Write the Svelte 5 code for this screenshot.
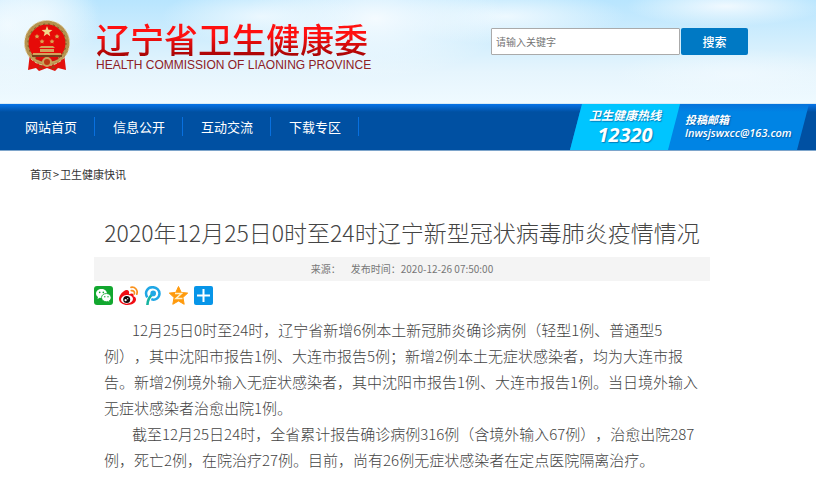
<script lang="ts">
  let keyword = "";

  const menu = ["网站首页", "信息公开", "互动交流", "下载专区"];

  const paragraphs = [
    "12月25日0时至24时，辽宁省新增6例本土新冠肺炎确诊病例（轻型1例、普通型5例），其中沈阳市报告1例、大连市报告5例；新增2例本土无症状感染者，均为大连市报告。新增2例境外输入无症状感染者，其中沈阳市报告1例、大连市报告1例。当日境外输入无症状感染者治愈出院1例。",
    "截至12月25日24时，全省累计报告确诊病例316例（含境外输入67例），治愈出院287例，死亡2例，在院治疗27例。目前，尚有26例无症状感染者在定点医院隔离治疗。",
  ];
</script>

<header>
  <a class="logo" href="/">
    <svg class="emblem" viewBox="0 0 48 52" aria-hidden="true">
      <path d="M7 33 L5 50 L13 48 L16 51 L24 48 L32 51 L35 48 L43 50 L41 33 Z" fill="#e3100b" />
      <circle cx="24" cy="23" r="20.500" fill="#e60b08" stroke="#b4924f" stroke-width="4" />
      <circle cx="24" cy="23" r="22.500" fill="none" stroke="#e2cf9c" stroke-width="1" stroke-dasharray="3 2" />
      <circle cx="24" cy="23" r="19" fill="none" stroke="#755020" stroke-width="1" stroke-dasharray="2 3" />
      <path d="M24 6 l1.400 3.700 4 .2 -3.100 2.500 1 3.900 -3.300 -2.200 -3.300 2.200 1 -3.900 -3.100 -2.500 4 -.2z" fill="#f3d98b" />
      <g fill="#dba652">
        <path d="M14 14l.8 1.600 1.700.1-1.300 1.200.4 1.700-1.600-.9-1.600.9.4-1.700-1.300-1.200 1.700-.1z" />
        <path d="M34 14l.8 1.600 1.700.1-1.300 1.200.4 1.700-1.600-.9-1.600.9.4-1.700-1.300-1.200 1.700-.1z" />
        <path d="M19 19l.8 1.600 1.700.1-1.300 1.200.4 1.700-1.600-.9-1.600.9.4-1.700-1.300-1.200 1.700-.1z" />
        <path d="M29 19l.8 1.600 1.700.1-1.300 1.200.4 1.700-1.600-.9-1.600.9.4-1.700-1.300-1.200 1.700-.1z" />
      </g>
      <path d="M18 26h12l2 2H16zM17 29h14v3H17zM10 33h28v2H10z" fill="#d3a45b" />
      <path d="M9 35h30v2H9z" fill="#72401c" />
      <path d="M6 33 Q12 42 24 42 T42 33 L38 40 Q24 47 10 40Z" fill="#c6a05a" />
      <path d="M13 38 Q24 44 35 38" fill="none" stroke="#d3120c" stroke-width="2" />
      <circle cx="24" cy="42" r="4" fill="#bd3a14" stroke="#caa35a" stroke-width="2" />
      <path d="M15 48l3-3 3 4zM33 48l-3-3-3 4z" fill="#a33a14" />
    </svg>
    <span class="name">
      <strong>辽宁省卫生健康委</strong>
      <small>HEALTH COMMISSION OF LIAONING PROVINCE</small>
    </span>
  </a>
  <form on:submit|preventDefault>
    <input type="text" aria-label="请输入关键字" placeholder="请输入关键字" bind:value={keyword} />
    <button type="submit">搜索</button>
  </form>
</header>

<nav>
  <ul>
    {#each menu as item}
      <li><a href="/">{item}</a></li>
    {/each}
  </ul>
  <div class="contact">
    <div class="hotline">
      <span>卫生健康热线</span>
      <b>12320</b>
    </div>
    <div class="mail">
      <span>投稿邮箱</span>
      <b>lnwsjswxcc@163.com</b>
    </div>
  </div>
</nav>

<div class="crumbs">
  <a href="/">首页</a>
  <span>&gt;</span>
  <a href="/">卫生健康快讯</a>
</div>

<article>
  <h1>2020年12月25日0时至24时辽宁新型冠状病毒肺炎疫情情况</h1>
  <div class="meta">
    <span>来源：</span>
    <span>发布时间：2020-12-26 07:50:00</span>
  </div>
  <div class="share">
    <a href="/" aria-label="微信">
      <svg viewBox="0 0 19 19">
        <rect width="19" height="19" rx="3" fill="#12a72f" />
        <path d="M7.500 3C4.400 3 2 5 2 7.600c0 1.500.8 2.700 2 3.500L3.500 13l2.200-1.200 1.800.3c3 0 5.500-2 5.500-4.500S10.500 3 7.500 3z" fill="#fff" />
        <path d="M12.300 7.500c-2.700 0-4.800 1.800-4.800 4.100s2.100 4.100 4.800 4.100l1.600-.3 1.900 1.100-.5-1.800c1.100-.7 1.800-1.800 1.800-3.100 0-2.300-2.100-4.100-4.800-4.100z" fill="#fff" stroke="#12a72f" stroke-width=".8" />
        <g fill="#12a72f"><circle cx="5.700" cy="6.400" r=".8" /><circle cx="9.300" cy="6.400" r=".8" /><circle cx="10.800" cy="10.700" r=".7" /><circle cx="14" cy="10.700" r=".7" /></g>
      </svg>
    </a>
    <a href="/" aria-label="新浪微博">
      <svg viewBox="0 0 19 19">
        <path d="M7.500 4C4.700 4.200 0 9.100 0 13c0 3.600 4 6 8.500 6 5.200 0 8.500-2.800 8.500-5.500 0-1.800-1.200-2.800-2.500-3.200.8-2.700-1.300-3.500-4.500-2.100C10.600 5.700 9.700 3.900 7.500 4z" fill="#f00d14" />
        <ellipse cx="8" cy="13.300" rx="6" ry="4.300" fill="#fff" transform="rotate(-7 8 13.300)" />
        <circle cx="7.700" cy="13.500" r="3.500" fill="#160909" />
        <circle cx="6.600" cy="14.200" r="1.100" fill="#fff" /><circle cx="8.700" cy="12.700" r=".6" fill="#fff" />
        <path d="M12.300 4.700c2.200-.4 3.600 1.300 3 3.200M12 1.300c4.200-.7 7.200 2.900 5.800 6.800" fill="none" stroke="#f9921e" stroke-width="1.700" stroke-linecap="round" />
      </svg>
    </a>
    <a href="/" aria-label="腾讯微博">
      <svg viewBox="0 0 19 19">
        <path d="M3.300 11.300C.1 6.100 3.500 1.200 8.700 1.200c4 0 6.800 2.900 6.800 6.400 0 4-4 7.300-8.200 5.600" fill="none" stroke="#20a7e5" stroke-width="2.500" />
        <path d="M3.400 19C3.500 14.200 5 11 8.700 8" fill="none" stroke="#16b4a0" stroke-width="2.600" />
        <circle cx="9.200" cy="7.400" r="2.800" fill="#20a7e5" />
      </svg>
    </a>
    <a href="/" aria-label="QQ空间">
      <svg viewBox="0 0 19 19">
        <path d="M9.500.5l2.700 5.900 6.500.7-4.800 4.400 1.300 6.800-5.700-3.300-5.700 3.300 1.300-6.800L.3 7.100l6.500-.7z" fill="#ff9a0c" stroke="#ff9a0c" stroke-linejoin="round" />
        <path d="M6 7.500h6.500L7 12.500h6.500" fill="none" stroke="#fff2cc" stroke-width="1.500" />
      </svg>
    </a>
    <a href="/" aria-label="更多">
      <svg viewBox="0 0 19 19">
        <rect width="19" height="19" rx="2" fill="#0795e8" />
        <path d="M9.500 3v13M3 9.500h13" stroke="#fff" stroke-width="2" />
      </svg>
    </a>
  </div>
  <div class="content">
    {#each paragraphs as text}
      <p>{text}</p>
    {/each}
  </div>
</article>

<style>
  :global(body) {
    margin: 0;
    background: #fff;
    color: #333;
    font-family: "Noto Sans CJK SC", sans-serif;
    font-size: 11px;
  }

  a {
    color: inherit;
    text-decoration: none;
  }

  header {
    box-sizing: border-box;
    height: 104px;
    padding: 20px 68px 0 23px;
    display: flex;
    justify-content: space-between;
    align-items: flex-start;
    border-bottom: 1px solid #d8ebf6;
    background:
      radial-gradient(ellipse 60px 40px at 5% 14%, #f1faffcc, transparent),
      radial-gradient(ellipse 90px 70px at 1% 24%, #f6fcffdd, transparent),
      radial-gradient(ellipse 100px 30px at 32% 16%, #f4fbffcc, transparent),
      radial-gradient(ellipse 130px 60px at 46% 18%, #f8fcffee, transparent),
      radial-gradient(ellipse 120px 28px at 62% 16%, #f4fbffdd, transparent),
      radial-gradient(ellipse 100px 20px at 89% 6%, #f8fcffdd, transparent),
      radial-gradient(ellipse 120px 26px at 90% 72%, #f2faffaa, transparent),
      linear-gradient(#b8e5fe, #d2eefd 40%, #e6f5fd 70%, #effaff);
  }

  .logo {
    display: flex;
    gap: 25px;
  }

  .emblem {
    width: 48px;
    height: 52px;
  }

  .name {
    display: flex;
    flex-direction: column;
  }

  .name strong {
    font-size: 34px;
    font-weight: 500;
    line-height: 38px;
    color: transparent;
    background: linear-gradient(#ff1010 40%, #a50505 95%);
    background-clip: text;
    white-space: nowrap;
  }

  .name small {
    font-family: "Liberation Sans", sans-serif;
    font-size: 12px;
    line-height: 14px;
    color: #8d2025;
    white-space: nowrap;
  }

  form {
    display: flex;
    gap: 1px;
    margin-top: 8px;
  }

  form input {
    box-sizing: border-box;
    width: 189px;
    height: 27px;
    padding: 0 4px;
    border: 1px solid #aaa;
    border-radius: 1px;
    font: 10px "Noto Sans CJK SC", sans-serif;
  }

  form input::placeholder {
    color: #757575;
  }

  form button {
    width: 67px;
    height: 27px;
    padding: 0;
    border: 0;
    border-radius: 2px;
    background: #0079c4;
    color: #fff;
    font: 500 12px "Noto Sans CJK SC", sans-serif;
    cursor: pointer;
  }

  nav {
    height: 46px;
    padding: 0 7px;
    display: flex;
    justify-content: space-between;
    background: linear-gradient(#0674e8, #0050a2 8px);
    border-bottom: 1px solid #7ea5cb;
  }

  ul {
    margin: 0;
    padding: 0 0 2px;
    display: flex;
    align-items: center;
    list-style: none;
  }

  li {
    padding: 0 17px 0 18px;
    border-right: 1px solid #0870df;
    color: #fff;
    font-size: 13px;
    line-height: 19px;
    white-space: nowrap;
  }

  .contact {
    display: flex;
    color: #fff;
    font-style: italic;
    font-weight: 700;
    text-shadow: 1px 1px 1px #00408088;
    background: linear-gradient(#0673dc, #0084e4 8px);
    clip-path: polygon(12px 0, 100% 0, calc(100% - 12px) 100%, 0 100%);
  }

  .contact b {
    font-family: "Open Sans", sans-serif;
    font-weight: 700;
  }

  .hotline {
    width: 110px;
    padding-top: 2px;
    display: flex;
    flex-direction: column;
    align-items: center;
    background: #00c5ff;
    clip-path: polygon(0 0, 100% 0, calc(100% - 12px) 100%, 0 100%);
  }

  .hotline span {
    font-size: 12px;
    line-height: 18px;
  }

  .hotline b {
    font-size: 20px;
    line-height: 22px;
  }

  .mail {
    width: 124px;
    padding: 8px 0 0 5px;
    display: flex;
    flex-direction: column;
  }

  .mail span {
    font-size: 11px;
    line-height: 15px;
  }

  .mail b {
    font-size: 11px;
    font-weight: 600;
    line-height: 12px;
  }

  .crumbs {
    padding: 14px 30px 0;
    display: flex;
    gap: 1px;
    line-height: 18px;
  }

  article {
    max-width: 616px;
    margin: 32px auto 0;
    padding: 0 106px 0 94px;
  }

  h1 {
    margin: 0;
    color: #444;
    font-size: 23px;
    font-weight: 300;
    line-height: 34px;
    text-align: center;
    white-space: nowrap;
  }

  .meta {
    margin-top: 8px;
    display: flex;
    justify-content: center;
    gap: 10px;
    background: #f4f4f4;
    color: #777;
    font-size: 10px;
    line-height: 24px;
  }

  .share {
    margin-top: 5px;
    display: flex;
    gap: 6px;
  }

  .share svg {
    display: block;
    width: 19px;
    height: 19px;
  }

  .content {
    margin-top: 12px;
    padding: 0 10px;
    color: #444;
    font-size: 15px;
    font-weight: 300;
    line-height: 26px;
    text-spacing-trim: space-all;
  }

  p {
    margin: 0;
    text-indent: 28px;
  }
</style>
